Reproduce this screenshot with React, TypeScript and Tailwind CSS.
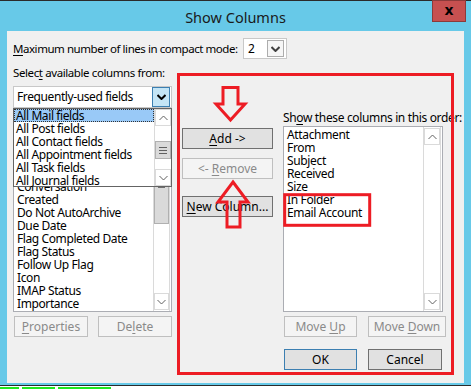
import React from 'react';

const leftItems = [
  'Attachment',
  'Categories',
  'Cc',
  'Changed By',
  'Contacts',
  'Conversation',
  'Created',
  'Do Not AutoArchive',
  'Due Date',
  'Flag Completed Date',
  'Flag Status',
  'Follow Up Flag',
  'Icon',
  'IMAP Status',
  'Importance',
];

const popupItems = [
  'All Mail fields',
  'All Post fields',
  'All Contact fields',
  'All Appointment fields',
  'All Task fields',
  'All Journal fields',
];

const shownItems = ['Attachment', 'From', 'Subject', 'Received', 'Size', 'In Folder', 'Email Account'];

function Chevron({ up = false, bold = false, className = '' }: { up?: boolean; bold?: boolean; className?: string }) {
  return (
    <svg width="9" height="6" viewBox="0 0 9 6" className={className}>
      <polyline
        points={up ? '0.5,5 4.5,1 8.5,5' : '0.5,1 4.5,5 8.5,1'}
        fill="none"
        stroke="currentColor"
        strokeWidth={bold ? 2 : 1}
      />
    </svg>
  );
}

function ArrowBox({ up = false }: { up?: boolean }) {
  return (
    <div className="h-[17px] shrink-0 flex items-center justify-center border border-[#dadada] bg-white text-[#606060]">
      <Chevron up={up} />
    </div>
  );
}

function Grip() {
  return (
    <div className="flex flex-col gap-[2px]">
      <div className="w-[8px] h-px bg-[#606060]" />
      <div className="w-[8px] h-px bg-[#606060]" />
      <div className="w-[8px] h-px bg-[#606060]" />
    </div>
  );
}

function Btn({
  children,
  disabled = false,
  primary = false,
  className = '',
}: {
  children: React.ReactNode;
  disabled?: boolean;
  primary?: boolean;
  className?: string;
}) {
  const look = disabled
    ? 'bg-[#f4f4f4] border-[#bfbfbf] text-[#8a8a8a]'
    : primary
    ? 'bg-[#e1e1e1] border-[#3c7fb1] text-black'
    : 'bg-[#e1e1e1] border-[#707070] text-black';
  return (
    <div className={`h-[21px] flex items-center justify-center border ${look} ${className}`}>
      <span>{children}</span>
    </div>
  );
}

function U({ children }: { children: React.ReactNode }) {
  return <span className="underline decoration-1 underline-offset-[2px]">{children}</span>;
}

export default function App() {
  return (
    <div className="relative w-[471px] h-[389px] overflow-hidden bg-white font-['Noto_Sans',sans-serif] text-[12px] leading-[16px] text-black">
      {/* window frame */}
      <div className="h-[386px] bg-[#67c9e8] border-t border-b border-[#2b2b2b] flex flex-col">
        {/* title bar */}
        <div className="relative h-[30px] shrink-0 flex items-center justify-center">
          <span className="text-[14.5px] text-[#1a1a1a] pt-[1px]">Show Columns</span>
          <div className="absolute top-[-1px] left-[432px] w-[34px] h-[22px] bg-[#c75050] border border-[#8c3a3a] flex items-center justify-center">
            <span className="font-['DejaVu_Sans',sans-serif] font-bold text-[14px] leading-none text-black -mt-[3px]">x</span>
          </div>
        </div>

        {/* client area */}
        <div className="ml-[7px] w-[457px] h-[352px] bg-[#f0f0f0] flex flex-col pl-[6px]">
          {/* compact mode row */}
          <div className="mt-[7px] h-[21px] flex items-center">
            <span className="w-[230px] whitespace-nowrap text-[11.5px] tracking-[-0.45px]">
              <U>M</U>aximum number of lines in compact mode:
            </span>
            <div className="w-[44px] h-[21px] bg-white border border-[#c8c8c8] flex items-center justify-between pl-[4px] pr-[2px]">
              <span>2</span>
              <div className="w-[17px] h-[17px] border border-[#adadad] bg-[#f6f6f6] flex items-center justify-center text-[#404040]">
                <Chevron bold />
              </div>
            </div>
          </div>

          {/* select label */}
          <div className="mt-[6px] h-[16px] whitespace-nowrap text-[11.5px] tracking-[-0.4px]">
            Selec<U>t</U> available columns from:
          </div>

          {/* main area */}
          <div className="mt-[5px] flex">
            {/* left column */}
            <div className="relative w-[159px] flex flex-col">
              <div className="h-[22px] bg-white border border-[#c8c8c8] flex items-center justify-between pl-[3px] pr-px">
                <span className="whitespace-nowrap tracking-[-0.4px]">Frequently-used fields</span>
                <div className="w-[18px] h-[20px] bg-[#c4e5f6] border border-[#3c7fb1] flex items-center justify-center text-black">
                  <Chevron bold />
                </div>
              </div>

              <div className="mt-[2px] h-[202px] bg-white border border-[#abadb3] flex overflow-hidden">
                <div className="flex-1 pl-[3px] pt-[4px] leading-[13px] tracking-[-0.4px]">
                  {leftItems.map((item) => (
                    <div key={item} className="h-[13px] whitespace-nowrap">
                      {item}
                    </div>
                  ))}
                </div>
                <div className="w-[17px] mr-px flex flex-col border-x border-[#dadada]">
                  <ArrowBox up />
                  <div className="h-[96px] bg-[#dadada] border border-[#b0b0b0] flex items-start justify-center pt-[56px]">
                    <div className="w-[7px] h-[3px] bg-[#707070]" />
                  </div>
                  <div className="flex-1" />
                  <ArrowBox />
                  <div className="h-px" />
                </div>
              </div>

              <div className="mt-[4px] flex justify-between pl-px">
                <Btn disabled className="w-[74px]">
                  <U>P</U>roperties
                </Btn>
                <Btn disabled className="w-[74px]">
                  De<U>l</U>ete
                </Btn>
              </div>

              {/* open dropdown */}
              <div className="absolute left-0 top-[22px] w-[159px] h-[79px] bg-white border border-[#646464] flex">
                <div className="flex-1 leading-[13px] tracking-[-0.4px]">
                  {popupItems.map((item, i) => (
                    <div
                      key={item}
                      className={`h-[13px] pl-[2px] whitespace-nowrap ${
                        i === 0 ? 'bg-[#99c9f7] outline-1 outline-dotted outline-[#333] -outline-offset-1' : ''
                      }`}
                    >
                      {item}
                    </div>
                  ))}
                </div>
                <div className="w-[17px] flex flex-col border-l border-[#dadada]">
                  <ArrowBox up />
                  <div className="h-[15px]" />
                  <div className="h-[18px] bg-[#dadada] border border-[#b0b0b0] flex items-center justify-center">
                    <Grip />
                  </div>
                  <div className="flex-1" />
                  <ArrowBox />
                </div>
              </div>
            </div>

            {/* middle column */}
            <div className="ml-[10px] w-[91px] flex flex-col">
              <Btn className="mt-[42px] h-[20px]">
                <U>A</U>dd -&gt;
              </Btn>
              <Btn disabled className="mt-[9px] h-[20px]">
                &lt;- <U>R</U>emove
              </Btn>
              <Btn className="mt-[17px] h-[20px]">
                <U>N</U>ew Column...
              </Btn>
            </div>

            {/* right column */}
            <div className="ml-[10px] w-[163px] flex flex-col">
              <div className="mt-[24px] h-[16px] whitespace-nowrap tracking-[-0.35px]">
                Sh<U>o</U>w these columns in this order:
              </div>
              <div className="w-[160px] h-[186px] bg-white border border-[#abadb3] flex overflow-hidden">
                <div className="flex-1 pl-[3px] pt-px leading-[13px] tracking-[-0.35px]">
                  {shownItems.map((item) => (
                    <div key={item} className="h-[13px] whitespace-nowrap">
                      {item}
                    </div>
                  ))}
                </div>
                <div className="w-[18px] mr-px pt-px flex flex-col border-x border-[#dadada]">
                  <ArrowBox up />
                  <div className="flex-1" />
                  <ArrowBox />
                  <div className="h-px" />
                </div>
              </div>
              <div className="mt-[4px] flex gap-[11px] pl-px">
                <Btn disabled className="w-[73px]">
                  Move <U>U</U>p
                </Btn>
                <Btn disabled className="w-[78px]">
                  Move <U>D</U>own
                </Btn>
              </div>
              <div className="mt-[12px] flex gap-[11px] pl-px">
                <Btn primary className="w-[73px]">
                  OK
                </Btn>
                <Btn className="w-[74px]">Cancel</Btn>
              </div>
            </div>
          </div>
        </div>
      </div>

      {/* taskbar strip */}
      <div className="mt-px flex gap-[3px]">
        <div className="w-[19px] h-[2px] bg-[#1ee81e]" />
        <div className="w-[33px] h-[2px] bg-[#1ee81e]" />
        <div className="w-[53px] h-[2px] bg-[#1ee81e]" />
      </div>

      {/* red annotations drawn over the screenshot */}
      <svg className="absolute inset-0 pointer-events-none" width="471" height="389" viewBox="0 0 471 389">
        <g fill="none" stroke="#ed1c24" strokeWidth="3">
          <rect x="178.5" y="74.5" width="274" height="299" />
          <rect x="284.7" y="194.7" width="85" height="30.6" />
          <polygon points="223,87.5 238,87.5 238,104 245,104 230.5,120 216,104 223,104" strokeLinejoin="miter" />
          <polygon points="233,182 248,202 240,202 240,227 227,227 227,202 218,202" strokeLinejoin="miter" />
        </g>
      </svg>
    </div>
  );
}
